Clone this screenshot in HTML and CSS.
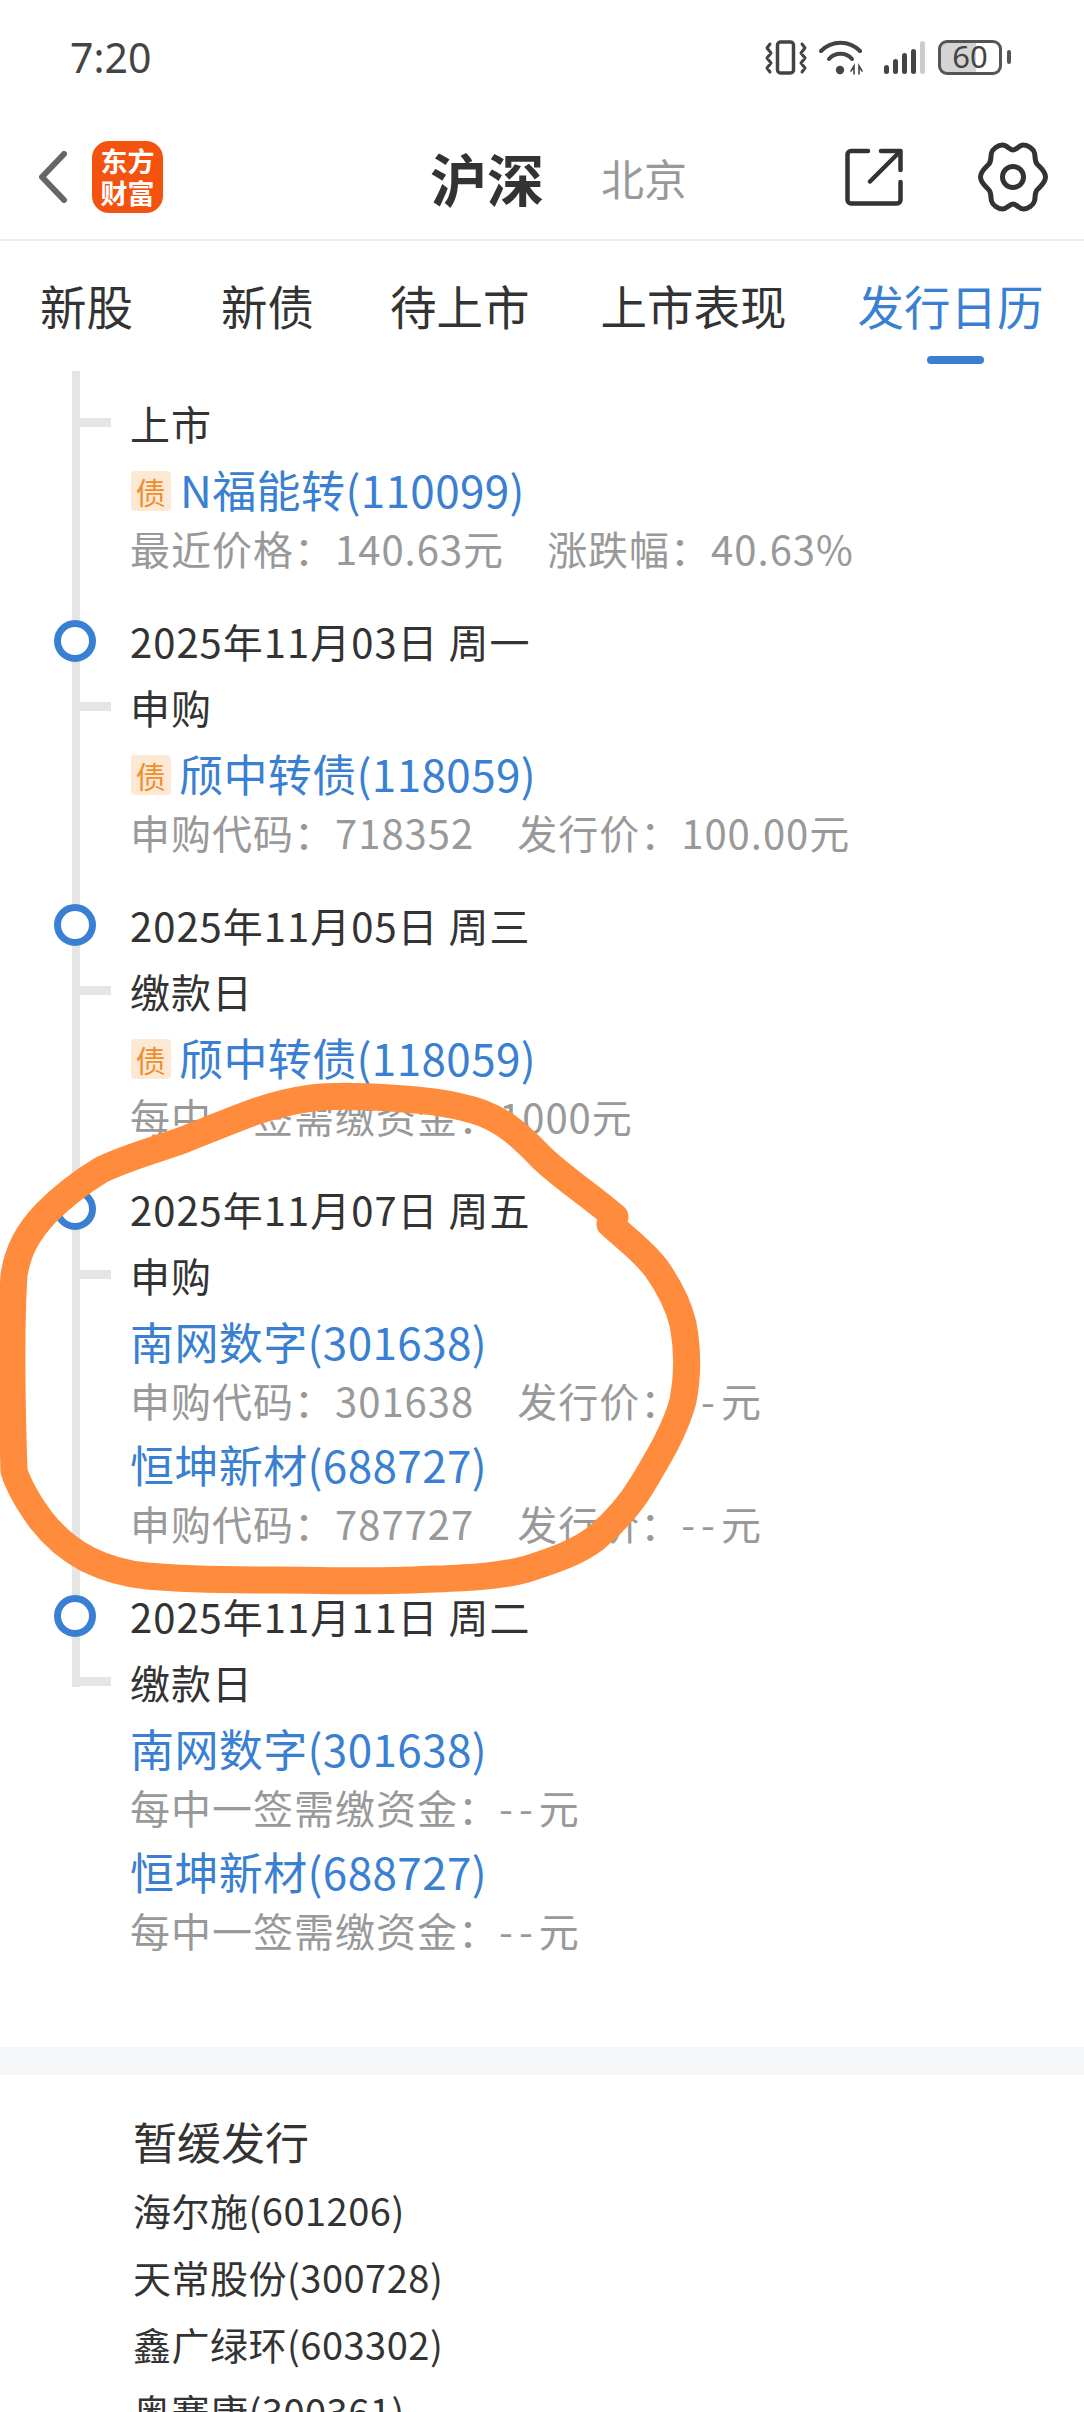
FILE: index.html
```html
<!DOCTYPE html>
<html lang="zh-CN">
<head>
  <meta charset="UTF-8">
  <title>发行日历</title>
  <link rel="stylesheet" href="styles.css">
</head>
<body>
  <div class="page">
    <!-- Status bar -->
    <div class="status-bar">
      <span class="clock">7:20</span>
      <div class="status-icons">
        <svg class="ic-vibrate" width="42" height="35" viewBox="0 0 42 35" fill="none" stroke="#444">
          <rect x="12.5" y="2" width="16" height="31" rx="3" stroke-width="3.5"/>
          <path d="M5 4L2 8L6 13L2 18L6 23L2 28L5 32M37 4L40 8L36 13L40 18L36 23L40 28L37 32" stroke-width="3" stroke-linecap="round" stroke-linejoin="round"/>
        </svg>
        <svg class="ic-wifi" width="44" height="35" viewBox="0 0 44 35" fill="none" stroke="#444" stroke-linecap="round">
          <path d="M2 11C13 0 30 0 41 11" stroke-width="4"/>
          <path d="M10 19C16 12 27 12 33 19" stroke-width="4"/>
          <circle cx="21" cy="30" r="4.2" fill="#444" stroke="none"/>
          <path d="M32 31L35 26V34M43 31L40 26V34" stroke-width="1.6"/>
        </svg>
        <svg class="ic-signal" width="42" height="35" viewBox="0 0 42 35">
          <rect x="0" y="25" width="5" height="9" rx="2.5" fill="#444"/>
          <rect x="9" y="19" width="5" height="15" rx="2.5" fill="#444"/>
          <rect x="18" y="13" width="5" height="21" rx="2.5" fill="#444"/>
          <rect x="27" y="9" width="5" height="25" rx="2.5" fill="#444"/>
          <rect x="36" y="1" width="5" height="33" rx="2.5" fill="#ccc"/>
        </svg>
        <div class="battery">60</div>
      </div>
    </div>

    <!-- Title bar -->
    <header class="title-bar">
      <svg class="back" width="30" height="52" viewBox="0 0 30 52" fill="none" stroke="#666" stroke-width="6" stroke-linecap="round" stroke-linejoin="round">
        <path d="M26 3L4 26L26 49"/>
      </svg>
      <div class="logo">东方<br>财富</div>
      <h1 class="title">沪深</h1>
      <span class="market">北京</span>
      <div class="actions">
        <svg width="58" height="58" viewBox="0 0 58 58" fill="none" stroke="#333" stroke-width="4.5" stroke-linecap="round" stroke-linejoin="round">
          <path d="M23 3H6a3.500 3.500 0 0 0-3.500 3.500V52a3.500 3.500 0 0 0 3.500 3.500H52a3.500 3.500 0 0 0 3.500-3.500V34"/>
          <path d="M36 3H55.500V22"/>
          <path d="M55 3.500L25 33.500"/>
        </svg>
        <svg width="70" height="70" viewBox="0 0 70 70" fill="none" stroke="#333" stroke-width="5">
          <path d="M35 8C38.500 8 41 3 45.500 3C50 3 55.500 7 56.500 11C57.500 15 56.500 19 59 22C61.500 25 67.500 29 67.500 35C67.500 41 61.500 45 59 48C56.500 51 57.500 55 56.500 59C55.500 63 50 67 45.500 67C41 67 38.500 62 35 62C31.500 62 29 67 24.500 67C20 67 14.500 63 13.500 59C12.500 55 13.500 51 11 48C8.500 45 2.500 41 2.500 35C2.500 29 8.500 25 11 22C13.500 19 12.500 15 13.500 11C14.500 7 20 3 24.500 3C29 3 31.500 8 35 8Z"/>
          <circle cx="35" cy="35" r="10.500"/>
        </svg>
      </div>
    </header>

    <!-- Tabs -->
    <nav class="tabs">
      <a class="tab tab-first">新股</a>
      <a class="tab tab-second">新债</a>
      <a class="tab">待上市</a>
      <a class="tab">上市表现</a>
      <a class="tab active">发行日历</a>
    </nav>

    <!-- Calendar -->
    <section class="timeline">
      <div class="day day-first">
        <div class="label">上市</div>
        <div class="entry">
          <div class="link"><span class="badge">债</span>N福能转(110099)</div>
          <div class="sub"><span>最近价格&#65306;140.63元</span><span>涨跌幅&#65306;40.63%</span></div>
        </div>
      </div>

      <div class="day">
        <div class="date">2025年11月03日 周一</div>
        <div class="label">申购</div>
        <div class="entry">
          <div class="link"><span class="badge badge-tight">债</span>颀中转债(118059)</div>
          <div class="sub"><span>申购代码&#65306;718352</span><span>发行价&#65306;100.00元</span></div>
        </div>
      </div>

      <div class="day">
        <div class="date">2025年11月05日 周三</div>
        <div class="label">缴款日</div>
        <div class="entry">
          <div class="link"><span class="badge badge-tight">债</span>颀中转债(118059)</div>
          <div class="sub"><span>每中一签需缴资金&#65306;1000元</span></div>
        </div>
      </div>

      <div class="day">
        <div class="date">2025年11月07日 周五</div>
        <div class="label">申购</div>
        <div class="entry">
          <div class="link">南网数字(301638)</div>
          <div class="sub"><span>申购代码&#65306;301638</span><span>发行价&#65306;<span class="dash">--</span>元</span></div>
        </div>
        <div class="entry">
          <div class="link">恒坤新材(688727)</div>
          <div class="sub"><span>申购代码&#65306;787727</span><span>发行价&#65306;<span class="dash">--</span>元</span></div>
        </div>
      </div>

      <div class="day day-last">
        <div class="date">2025年11月11日 周二</div>
        <div class="label">缴款日</div>
        <div class="entry">
          <div class="link">南网数字(301638)</div>
          <div class="sub"><span>每中一签需缴资金&#65306;<span class="dash">--</span>元</span></div>
        </div>
        <div class="entry">
          <div class="link">恒坤新材(688727)</div>
          <div class="sub"><span>每中一签需缴资金&#65306;<span class="dash">--</span>元</span></div>
        </div>
      </div>
    </section>

    <div class="band"></div>

    <!-- Suspended -->
    <section class="suspended">
      <h2>暂缓发行</h2>
      <ul>
        <li>海尔施(601206)</li>
        <li>天常股份(300728)</li>
        <li>鑫广绿环(603302)</li>
        <li>奥赛康(300361)</li>
      </ul>
    </section>

    <!-- Hand drawn marker ring over the screenshot -->
    <svg class="scribble" width="1084" height="2412" viewBox="0 0 1084 2412" fill="none" stroke="#ff8c3c" stroke-width="27" stroke-linecap="round" stroke-linejoin="round">
      <path d="M615 1217C590 1195 565 1180 541 1157C520 1135 505 1122 482 1113C450 1102 420 1100 390 1098C360 1096 335 1095 312 1098C290 1101 275 1105 257 1111C232 1120 208 1130 183 1140C155 1150 125 1158 101 1170C78 1184 62 1197 46 1213C28 1232 18 1250 14 1275C10 1340 12 1410 14 1471C20 1490 30 1505 41 1520C55 1538 70 1550 87 1559C105 1568 125 1574 147 1576C190 1580 232 1580 275 1580C320 1580 365 1582 413 1580C455 1578 495 1578 527 1569C555 1560 578 1552 596 1538C615 1522 630 1505 642 1485C660 1455 675 1430 683 1401C688 1375 688 1350 683 1324C678 1303 668 1285 656 1268C642 1250 625 1238 610 1224"/>
    </svg>
  </div>
</body>
</html>
```

FILE: styles.css
```css
/* General Styles */
*,
*::before,
*::after {
  box-sizing: border-box;
}

html,
body {
  margin: 0;
  padding: 0;
  height: 2412px;
  overflow: hidden;
  background-color: #fff;
}

.page {
  position: relative;
  width: 1084px;
  height: 2412px;
  overflow: hidden;
  font-family: "Noto Sans CJK SC", "Noto Sans", sans-serif;
  color: #333;
}

/* Status bar */
.status-bar {
  display: flex;
  justify-content: space-between;
  align-items: center;
  height: 114px;
  padding: 0 74px 0 70px;
}

.clock {
  font-family: "Noto Sans", sans-serif;
  font-size: 41px;
  color: #444;
}

.status-icons {
  display: flex;
  align-items: center;
  gap: 12px;
}

.ic-signal {
  margin-left: 9px;
}

.battery {
  position: relative;
  width: 64px;
  height: 35px;
  margin-right: 8px;
  border: 3.5px solid #555;
  border-radius: 9px;
  background: linear-gradient(90deg, #d4d4d4 60%, #fff 60%);
  font-family: "Noto Sans", sans-serif;
  font-size: 31px;
  line-height: 27px;
  text-align: center;
  color: #444;
}

.battery::after {
  content: "";
  position: absolute;
  right: -12px;
  top: 7px;
  width: 4px;
  height: 14px;
  border-radius: 2px;
  background-color: #555;
}

/* Title bar */
.title-bar {
  display: flex;
  align-items: center;
  height: 127px;
  padding: 0 36px 0 38px;
  border-bottom: 2px solid #eee;
}

.back {
  margin-right: 24px;
}

.logo {
  width: 71px;
  height: 72px;
  padding-top: 4px;
  border-radius: 17px;
  background-color: #f4520f;
  color: #fff;
  font-size: 27px;
  font-weight: 700;
  line-height: 32px;
  text-align: center;
}

.title {
  margin: 0 0 0 267px;
  font-size: 57px;
  font-weight: 700;
  color: #333;
}

.market {
  margin-left: 57px;
  font-size: 43px;
  color: #999;
}

.actions {
  display: flex;
  align-items: center;
  gap: 75px;
  margin-left: auto;
}

/* Tabs */
.tabs {
  display: flex;
  align-items: center;
  gap: 71px;
  height: 130px;
  padding: 0 0 3px 40px;
}

.tab {
  position: relative;
  font-size: 46.5px;
  color: #333;
}

.tab-first {
  margin-right: 17px;
}

.tab-second {
  margin-right: 5px;
}

.tab.active {
  color: #3a80d2;
}

.tab.active::after {
  content: "";
  position: absolute;
  left: 69px;
  bottom: -26px;
  width: 57px;
  height: 8px;
  border-radius: 4px;
  background-color: #3a80d2;
}

/* Timeline */
.day {
  position: relative;
  padding: 0 0 34px 130px;
}

.day::before {
  content: "";
  position: absolute;
  left: 72px;
  top: 0;
  bottom: 0;
  width: 8px;
  background-color: #e5e5e5;
}

.day-first {
  padding-top: 19px;
}

.day-last::before {
  bottom: auto;
  height: 104px;
}

.date,
.label {
  position: relative;
  height: 66px;
  font-size: 40px;
  line-height: 66px;
  letter-spacing: 1px;
  color: #333;
}

/* circle sits on the rail */
.date::before {
  content: "";
  position: absolute;
  left: -76px;
  top: 12px;
  width: 42px;
  height: 42px;
  border: 7px solid #3a80d2;
  border-radius: 50%;
  background-color: #fff;
}

.label::before {
  content: "";
  position: absolute;
  left: -50px;
  top: 28px;
  width: 31px;
  height: 9px;
  background-color: #e5e5e5;
}

.entry + .entry {
  margin-top: 5px;
}

.link {
  display: flex;
  align-items: center;
  height: 66px;
  font-size: 44px;
  letter-spacing: 0.4px;
  color: #3a80d2;
}

.badge {
  width: 40px;
  height: 40px;
  margin: 4px 9px 0 1px;
  border-radius: 4px;
  background-color: #fde8d4;
  color: #ee8f2e;
  font-size: 30px;
  line-height: 40px;
  text-align: center;
}

.badge-tight {
  margin-right: 8px;
}

.sub {
  display: flex;
  gap: 43px;
  height: 52px;
  font-size: 40px;
  line-height: 52px;
  letter-spacing: 1px;
  color: #999;
}

.dash {
  letter-spacing: 6px;
}

.band {
  height: 28px;
  margin-top: 57px;
  background-color: #f5f6f8;
}

/* Suspended list */
.suspended {
  padding: 36px 0 0 133px;
}

.suspended h2 {
  margin: 0 0 5px;
  font-size: 44px;
  font-weight: 400;
  line-height: 60px;
  color: #333;
}

.suspended ul {
  margin: 0;
  padding: 0;
  list-style: none;
}

.suspended li {
  font-size: 38px;
  line-height: 67px;
  letter-spacing: 0.5px;
  color: #333;
}

/* Marker ring */
.scribble {
  position: absolute;
  left: 0;
  top: 0;
}
```
